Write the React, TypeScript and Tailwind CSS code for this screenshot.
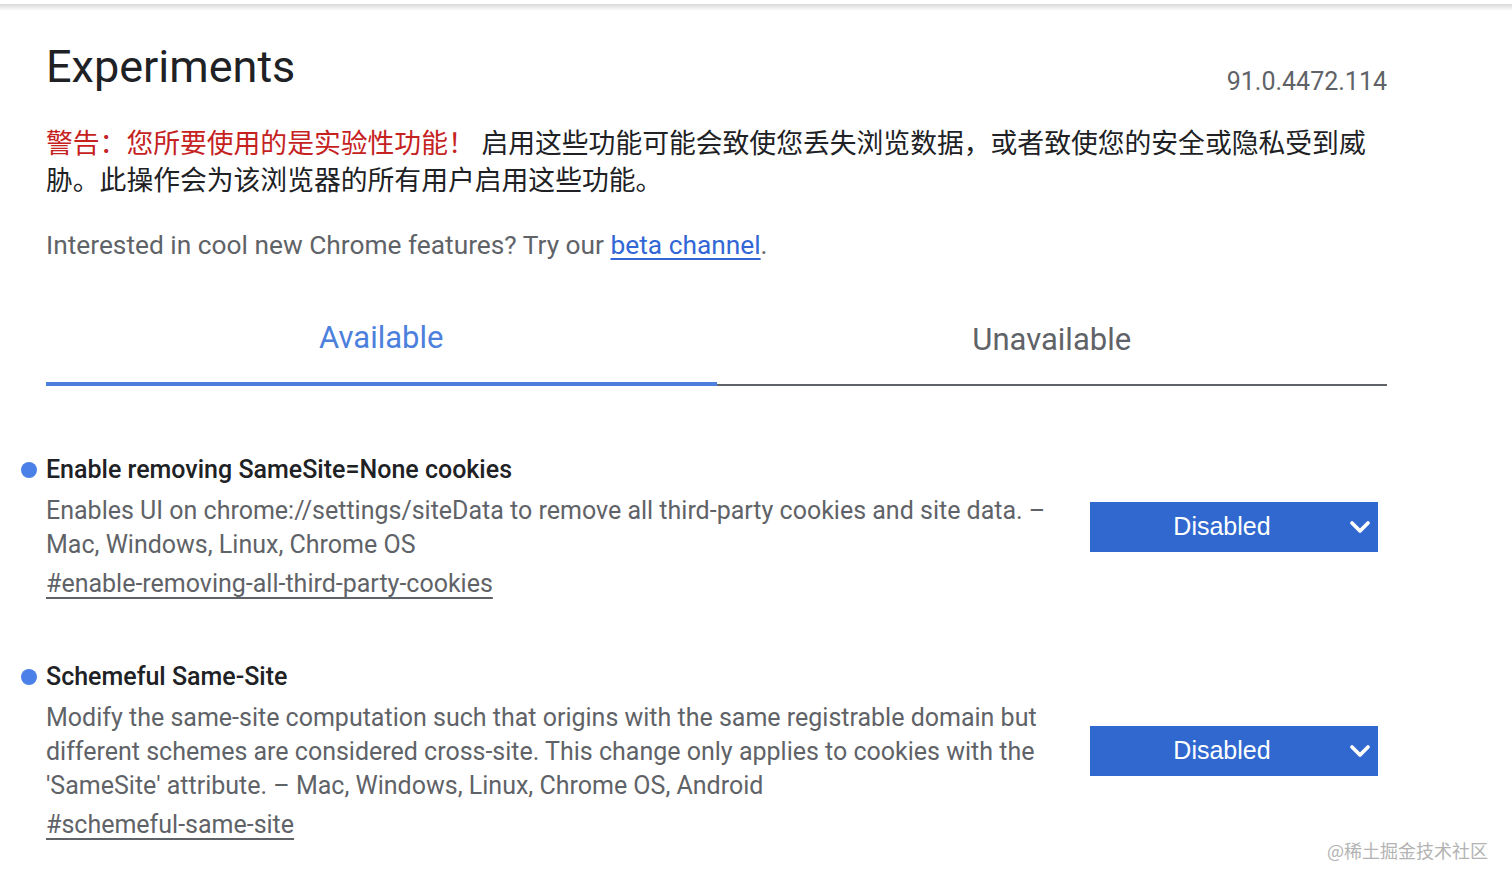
import { ChevronDown } from 'lucide-react'

const FLAGS = [
  {
    name: 'Enable removing SameSite=None cookies',
    desc: 'Enables UI on chrome://settings/siteData to remove all third-party cookies and site data. – Mac, Windows, Linux, Chrome OS',
    link: '#enable-removing-all-third-party-cookies',
  },
  {
    name: 'Schemeful Same-Site',
    desc: "Modify the same-site computation such that origins with the same registrable domain but different schemes are considered cross-site. This change only applies to cookies with the 'SameSite' attribute. – Mac, Windows, Linux, Chrome OS, Android",
    link: '#schemeful-same-site',
  },
]

function FlagRow({ name, desc, link }: { name: string; desc: string; link: string }) {
  return (
    <div className="flex items-center">
      <div className="w-[1000px] flex-shrink-0">
        <div className="flex items-center text-[25px] leading-[34px] font-medium text-[#202124]">
          <span className="w-4 h-4 rounded-full bg-[#4a80e8] -ml-[25px] mr-[9px] flex-shrink-0" />
          {name}
        </div>
        <p className="mt-[7px] text-[25px] leading-[34px] text-[#5f6368]">{desc}</p>
        <a href="#" className="mt-[5px] block text-[25px] leading-[34px] text-[#5f6368] underline underline-offset-[5px]">
          {link}
        </a>
      </div>
      <button className="ml-[44px] w-[288px] h-[50px] bg-[#3068d0] text-white flex items-center font-['Liberation_Sans',sans-serif] text-[25px]">
        <span className="flex-1 pl-[10px] text-center">Disabled</span>
        <ChevronDown className="w-8 h-8 mr-[2px]" strokeWidth={2.75} />
      </button>
    </div>
  )
}

export default function App() {
  return (
    <div className="relative h-[885px] overflow-hidden bg-white font-['Roboto','Noto_Sans_CJK_SC',sans-serif]">
      <div className="pt-[4px]">
        <div className="h-[7px] bg-gradient-to-b from-[#d9d9d9] to-white" />
      </div>

      <div className="ml-[46px] w-[1341px]">
        {/* header */}
        <div className="flex justify-between items-start mt-[30px]">
          <h1 className="text-[45px] leading-[52px] text-[#202124]">Experiments</h1>
          <span className="mt-[26px] text-[25px] leading-[30px] text-[#5f6368]">91.0.4472.114</span>
        </div>

        <p className="mt-[29px] text-[26.8px] leading-[37px] text-[#202124]">
          <span className="text-[#c5221f]">警告：您所要使用的是实验性功能！</span> 启用这些功能可能会致使您丢失浏览数据，或者致使您的安全或隐私受到威胁。此操作会为该浏览器的所有用户启用这些功能。
        </p>

        <p className="mt-[27px] text-[26.3px] leading-[37px] text-[#5f6368]">
          Interested in cool new Chrome features? Try our{' '}
          <a href="#" className="text-[#3367d6] underline underline-offset-[4px]">beta channel</a>.
        </p>

        {/* tabs */}
        <div className="mt-[54px] flex items-end">
          <div className="flex-1 text-center pb-[24px] border-b-4 border-[#4c80dc] text-[31px] leading-[40px] text-[#4c80dc]">
            Available
          </div>
          <div className="flex-1 text-center pb-[24px] border-b-2 border-[#5f6368] text-[31px] leading-[40px] text-[#5f6368]">
            Unavailable
          </div>
        </div>

        {/* flags */}
        <div className="mt-[67px] flex flex-col gap-[59px]">
          {FLAGS.map((f) => (
            <FlagRow key={f.link} {...f} />
          ))}
        </div>
      </div>

      <div className="absolute right-[24px] bottom-[23px] text-[18px] leading-[24px] text-[#b3b3b3] font-['Noto_Sans_CJK_SC',sans-serif]">
        @稀土掘金技术社区
      </div>
    </div>
  )
}
